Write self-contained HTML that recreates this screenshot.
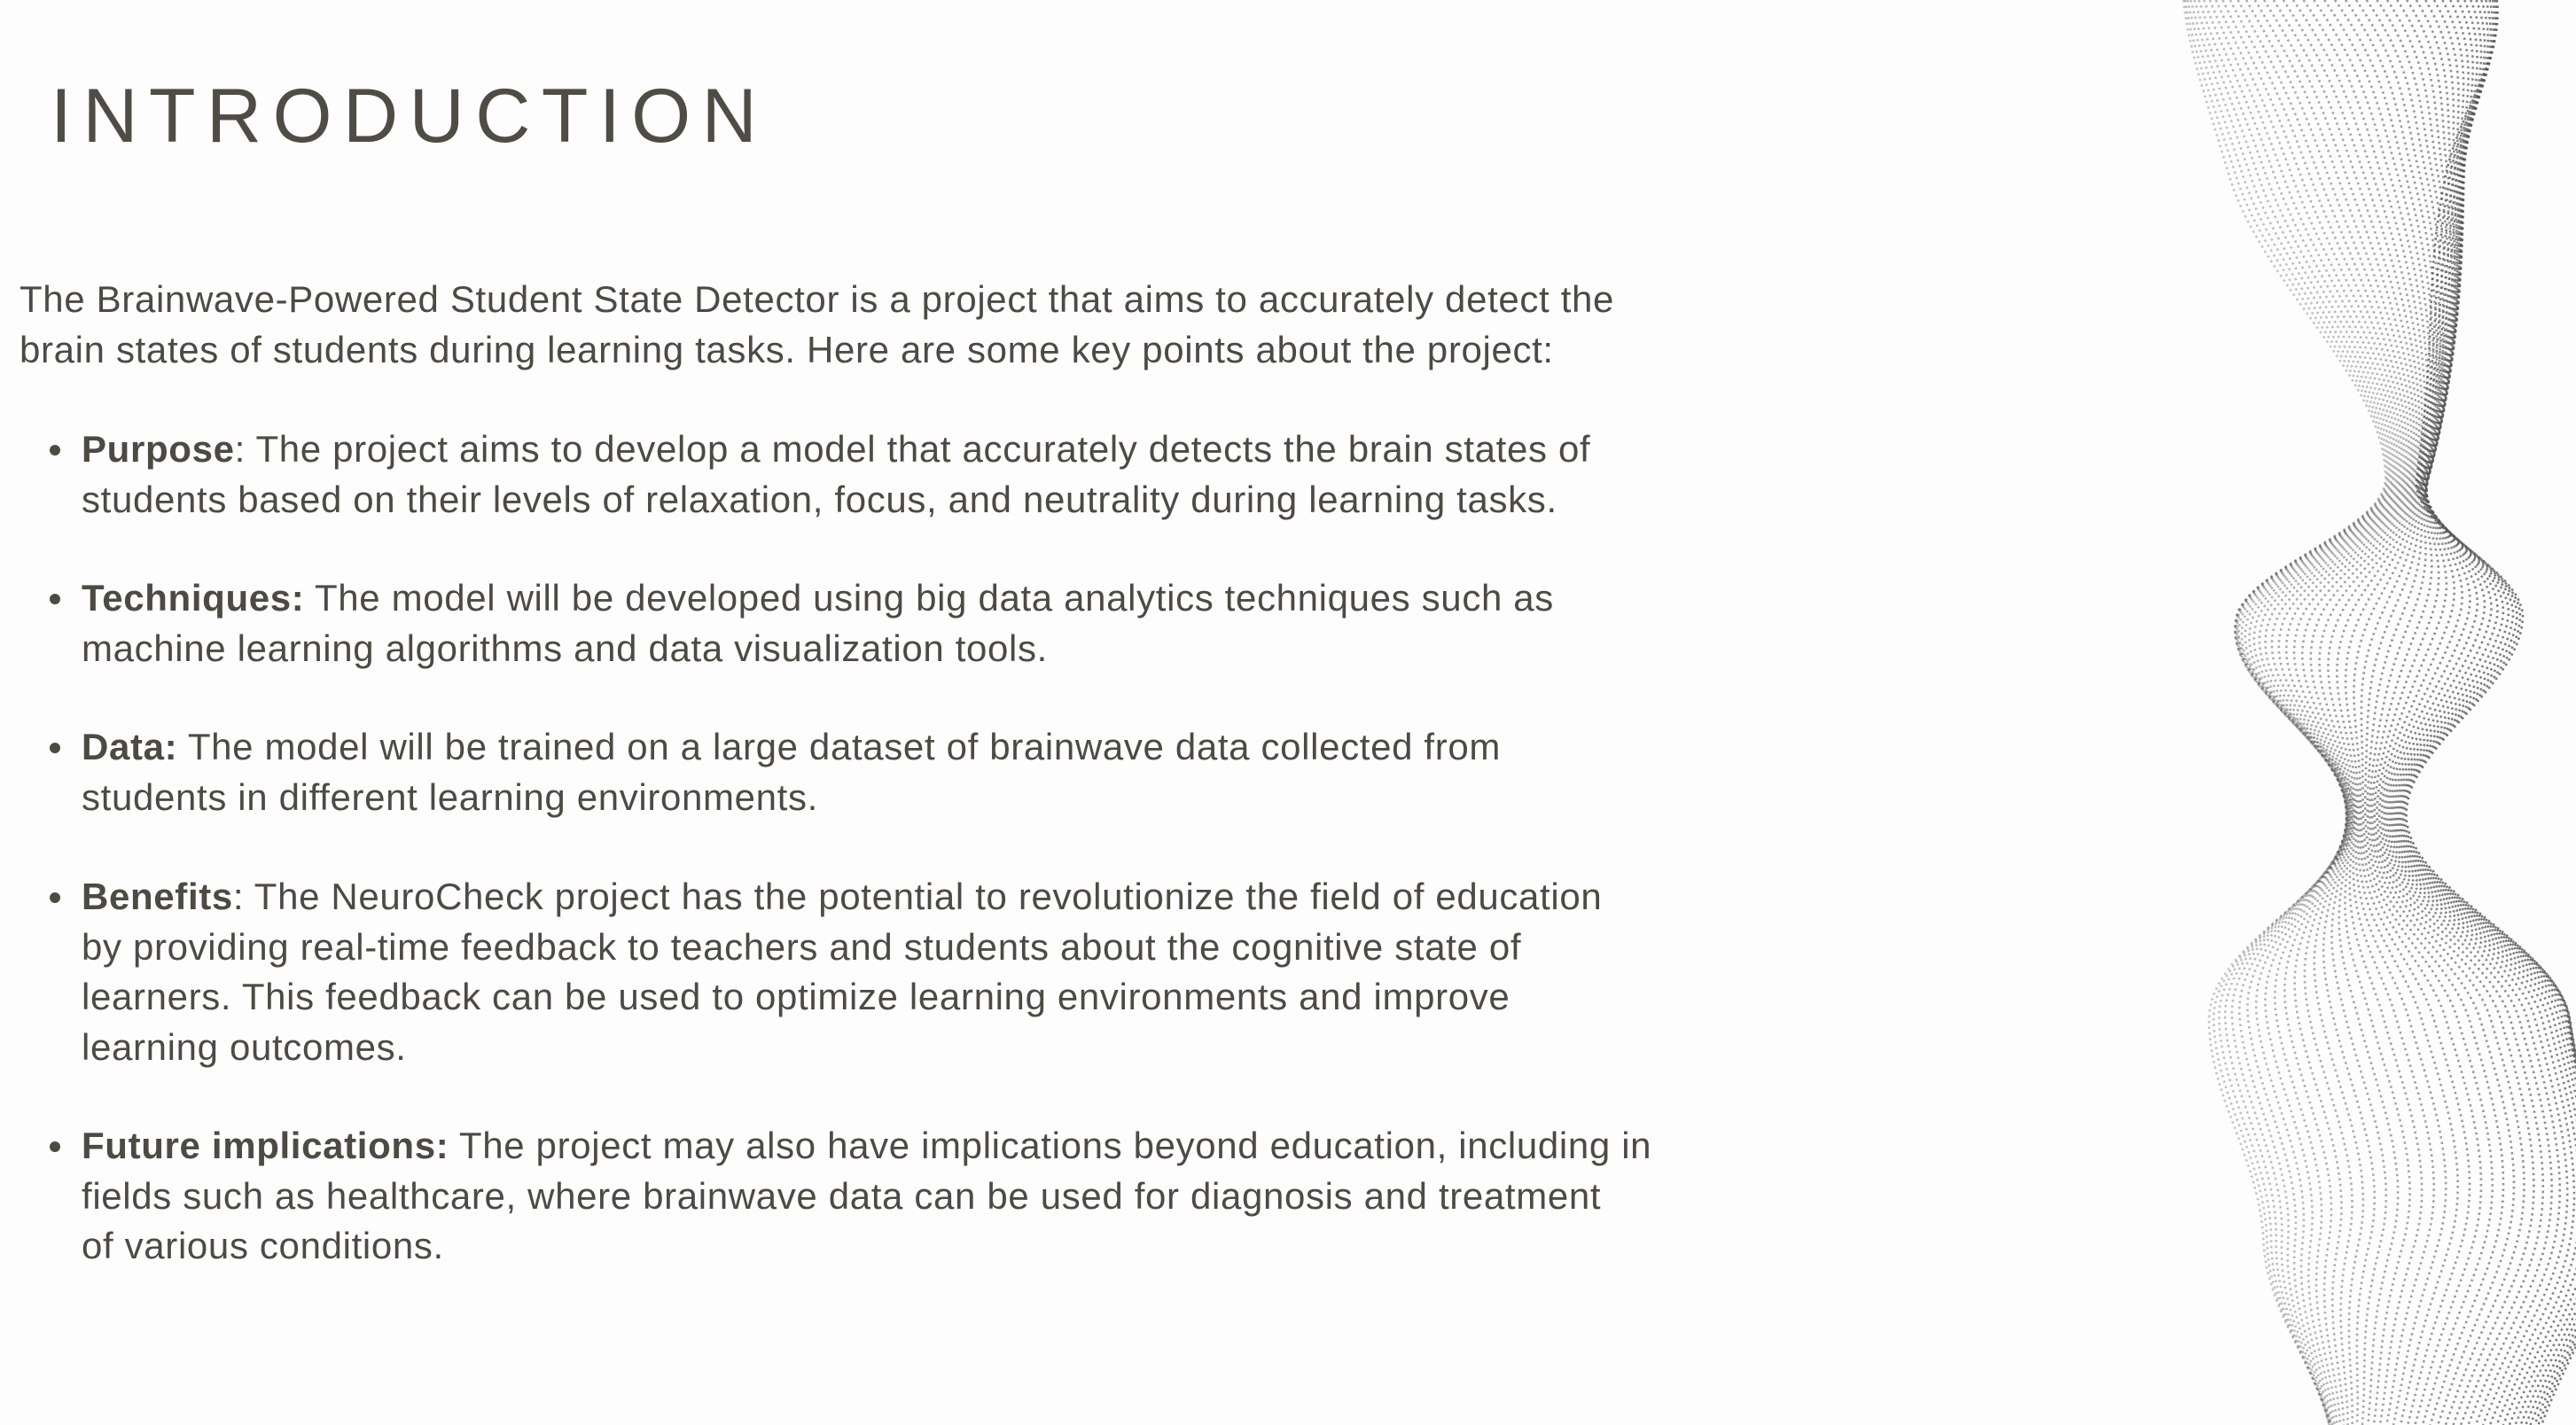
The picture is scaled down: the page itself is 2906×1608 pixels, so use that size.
<!DOCTYPE html>
<html><head><meta charset="utf-8"><style>
html,body{margin:0;padding:0;background:#fdfdfd;}
body{width:2906px;height:1608px;position:relative;overflow:hidden;font-family:"Liberation Sans",sans-serif;color:#4d4a44;}
h1{position:absolute;left:57px;top:88px;margin:0;font-weight:400;font-size:86px;letter-spacing:12.5px;line-height:1;color:#4f4c45;}
.t{position:absolute;left:22px;font-size:42px;letter-spacing:0.65px;white-space:nowrap;line-height:56.5px;}
.b{left:92px;}
.dot{position:absolute;left:56px;width:12px;height:12px;border-radius:50%;background:#4d4a44;}
b{font-weight:700;}
svg{position:absolute;left:0;top:0;}
</style></head><body>
<h1>INTRODUCTION</h1>
<div class="t" style="top:310px">The Brainwave-Powered Student State Detector is a project that aims to accurately detect the<br>brain states of students during learning tasks. Here are some key points about the project:</div>
<div class="dot" style="top:502px"></div>
<div class="t b" style="top:479px"><b>Purpose</b>: The project aims to develop a model that accurately detects the brain states of<br>students based on their levels of relaxation, focus, and neutrality during learning tasks.</div>
<div class="dot" style="top:670px"></div>
<div class="t b" style="top:647px"><b>Techniques:</b> The model will be developed using big data analytics techniques such as<br>machine learning algorithms and data visualization tools.</div>
<div class="dot" style="top:838px"></div>
<div class="t b" style="top:815px"><b>Data:</b> The model will be trained on a large dataset of brainwave data collected from<br>students in different learning environments.</div>
<div class="dot" style="top:1007px"></div>
<div class="t b" style="top:984px"><b>Benefits</b>: The NeuroCheck project has the potential to revolutionize the field of education<br>by providing real-time feedback to teachers and students about the cognitive state of<br>learners. This feedback can be used to optimize learning environments and improve<br>learning outcomes.</div>
<div class="dot" style="top:1288px"></div>
<div class="t b" style="top:1265px"><b>Future implications:</b> The project may also have implications beyond education, including in<br>fields such as healthcare, where brainwave data can be used for diagnosis and treatment<br>of various conditions.</div>
<svg id="w" width="2906" height="1608" viewBox="0 0 2906 1608"></svg>
<script>
(function(){
var K=[[0,2640,140],[200,2620,120],[540,2700,50],[700,2690,200],[930,2700,40],[1150,2700,190],[1400,2740,160],[1608,2740,130]];
function f(y){for(var i=0;i<K.length-1;i++){if(y<=K[i+1][0]){var a=K[i],b=K[i+1],t=(y-a[0])/(b[0]-a[0]);t=(1-Math.cos(t*Math.PI))/2;return [a[1]+(b[1]-a[1])*t,a[2]+(b[2]-a[2])*t];}}return [K[K.length-1][1],K[K.length-1][2]];}
var s='',N=44;
for(var j=0;j<N;j++){var u=j/(N-1)*2-1;var d='';
for(var y=0;y<=1608;y+=8){var c=f(y);var ph=Math.sin(y/160)*0.9+Math.sin(y/370)*0.6;var x=c[0]+c[1]*Math.sin(u*Math.PI/2*0.95+ph*0.5)+40*Math.sin(y/210+u*1.2);d+=(y?'L':'M')+x.toFixed(1)+' '+y;}
var op=(0.35+0.45*(u+1)/2).toFixed(2);
s+='<path d="'+d+'" fill="none" stroke="#555" stroke-width="2.6" stroke-dasharray="2.5 4" opacity="'+op+'"/>';}
document.getElementById('w').innerHTML=s;
})();
</script>
</body></html>
